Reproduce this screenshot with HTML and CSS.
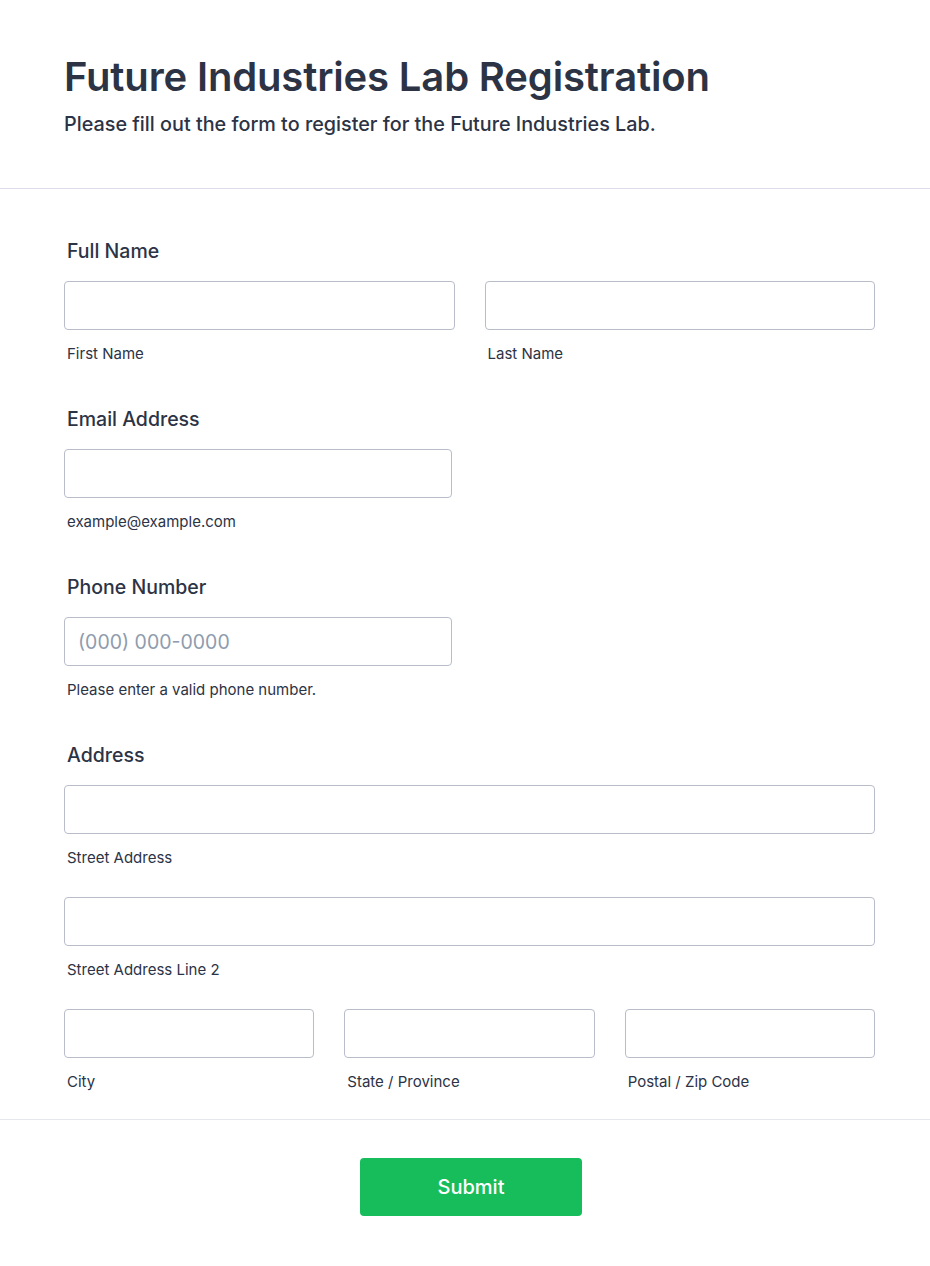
FILE: index.html
```html
<!DOCTYPE html>
<html lang="en">
<head>
<meta charset="utf-8">
<title>Future Industries Lab Registration</title>
<link rel="stylesheet" href="styles.css">
</head>
<body>
<main class="form">
  <header class="form-header">
    <h1 class="form-title">Future Industries Lab Registration</h1>
    <p class="form-subtitle">Please fill out the form to register for the Future Industries Lab.</p>
  </header>

  <section class="form-body">
    <div class="field">
      <label class="field-label">Full Name</label>
      <div class="row row-2">
        <div class="sub"><input class="input" type="text"><span class="sublabel">First Name</span></div>
        <div class="sub"><input class="input" type="text"><span class="sublabel">Last Name</span></div>
      </div>
    </div>

    <div class="field">
      <label class="field-label">Email Address</label>
      <div class="sub half"><input class="input" type="email"><span class="sublabel">example@example.com</span></div>
    </div>

    <div class="field">
      <label class="field-label">Phone Number</label>
      <div class="sub half"><input class="input" type="tel" placeholder="(000) 000-0000"><span class="sublabel">Please enter a valid phone number.</span></div>
    </div>

    <div class="field field-address">
      <label class="field-label">Address</label>
      <div class="stack">
        <div class="sub"><input class="input" type="text"><span class="sublabel">Street Address</span></div>
        <div class="sub"><input class="input" type="text"><span class="sublabel">Street Address Line 2</span></div>
        <div class="row row-3">
          <div class="sub"><input class="input" type="text"><span class="sublabel">City</span></div>
          <div class="sub"><input class="input" type="text"><span class="sublabel">State / Province</span></div>
          <div class="sub"><input class="input" type="text"><span class="sublabel">Postal / Zip Code</span></div>
        </div>
      </div>
    </div>
  </section>

  <footer class="form-footer">
    <button class="submit" type="button">Submit</button>
  </footer>
</main>
</body>
</html>
```

FILE: styles.css
```css
* { box-sizing: border-box; }

html, body {
  margin: 0;
  padding: 0;
  background: #ffffff;
}

body {
  font-family: Inter, "Noto Sans", "Liberation Sans", sans-serif;
  color: #2c3345;
}

.form-header {
  padding: 53px 64px 0;
  height: 189px;
  border-bottom: 1px solid #dcdbe9;
}

.form-title {
  margin: 0;
  font-size: 40px;
  line-height: 48px;
  font-weight: 600;
  letter-spacing: -0.15px;
}

.form-subtitle {
  margin: 10px 0 0;
  font-size: 19.8px;
  line-height: 26px;
  font-weight: 500;
}

.form-body {
  padding: 50px 55px 0 64px;
  border-bottom: 1px solid #e6e6ef;
}

.field {
  margin-bottom: 44px;
}

.field-address {
  margin-bottom: 28px;
}

.field-label {
  display: block;
  padding-left: 3px;
  font-size: 19.5px;
  line-height: 24px;
  font-weight: 500;
  margin-bottom: 18px;
}

.stack {
  display: flex;
  flex-direction: column;
  gap: 30px;
}

.row {
  display: grid;
  gap: 30px;
}

.row-2 { grid-template-columns: 1fr 1fr; }
.row-3 { grid-template-columns: 1fr 1fr 1fr; }

.sub {
  display: flex;
  flex-direction: column;
}

.half {
  width: 388px;
}

.input {
  display: block;
  width: 100%;
  height: 49px;
  margin: 0;
  padding: 0 13px;
  border: 1px solid #b8bdc9;
  border-radius: 4px;
  background: #ffffff;
  font-family: inherit;
  font-size: 19.5px;
  color: #2c3345;
  outline: none;
}

.input::placeholder {
  color: #8e9cae;
}

.sublabel {
  display: block;
  padding-left: 3px;
  margin-top: 15px;
  font-size: 15px;
  line-height: 18px;
  color: #2c3345;
}

.form-footer {
  display: flex;
  justify-content: center;
  padding: 38px 0 50px 12px;
}

.submit {
  width: 222px;
  height: 58px;
  border: none;
  border-radius: 4px;
  background: #18bd5b;
  color: #ffffff;
  font-family: inherit;
  font-size: 20px;
  font-weight: 500;
  cursor: pointer;
}
```
